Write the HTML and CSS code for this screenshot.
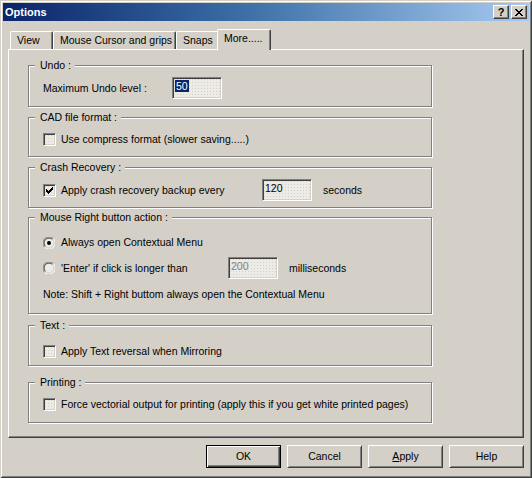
FILE: index.html
```html
<!DOCTYPE html>
<html>
<head>
<meta charset="utf-8">
<title>Options</title>
<link rel="stylesheet" href="styles.css">
</head>
<body>
<div class="window">
  <div class="titlebar">
    <span class="title">Options</span>
    <span class="capbtn help-btn">?</span>
    <span class="capbtn close-btn">
      <svg width="8" height="7" viewBox="0 0 8 7" shape-rendering="crispEdges"><path d="M0 0h2v1H0zM6 0h2v1H6zM1 1h2v1H1zM5 1h2v1H5zM2 2h4v1H2zM3 3h2v1H3zM2 4h4v1H2zM1 5h2v1H1zM5 5h2v1H5zM0 6h2v1H0zM6 6h2v1H6z" fill="#000"/></svg>
    </span>
  </div>
  <div class="body">
    <div class="tabs">
      <div class="tab t-view">View</div>
      <div class="tab t-mouse">Mouse Cursor and grips</div>
      <div class="tab t-snaps">Snaps</div>
      <div class="tab tab-sel t-more">More.....</div>
    </div>
    <div class="panel">
      <div class="group g-undo">
        <span class="legend">Undo :</span>
        <div class="row r-undo">
          <span class="lbl w-undo">Maximum Undo level :</span>
          <span class="edit"><span class="sel">50</span></span>
        </div>
      </div>
      <div class="group g-cad">
        <span class="legend">CAD file format :</span>
        <div class="row r-cad">
          <span class="check"></span>
          <span class="ctext">Use compress format (slower saving.....)</span>
        </div>
      </div>
      <div class="group g-crash">
        <span class="legend">Crash Recovery :</span>
        <div class="row r-crash">
          <span class="lblbox w-crash">
            <span class="check">
              <svg width="13" height="13" viewBox="0 0 13 13" shape-rendering="crispEdges"><path d="M3 5h1v3H3zM4 6h1v3H4zM5 7h1v3H5zM6 6h1v3H6zM7 5h1v3H7zM8 4h1v3H8zM9 3h1v3H9z" fill="#000"/></svg>
            </span>
            <span class="ctext">Apply crash recovery backup every</span>
          </span>
          <span class="edit">120</span>
          <span class="unit">seconds</span>
        </div>
      </div>
      <div class="group g-mouse">
        <span class="legend">Mouse Right button action :</span>
        <div class="row r-m1">
          <span class="radio">
            <svg width="12" height="12" viewBox="0 0 12 12">
              <circle cx="6" cy="6" r="5.5" fill="#EDEBE6"/>
              <path d="M1.6 10.4A5.5 5.5 0 0 1 10.4 1.6" fill="none" stroke="#808080" stroke-width="1"/>
              <path d="M10.4 1.6A5.5 5.5 0 0 1 1.6 10.4" fill="none" stroke="#ffffff" stroke-width="1"/>
              <path d="M2.5 9.5A4.5 4.5 0 0 1 9.5 2.5" fill="none" stroke="#404040" stroke-width="1"/>
              <path d="M9.5 2.5A4.5 4.5 0 0 1 2.5 9.5" fill="none" stroke="#D4D0C8" stroke-width="1"/>
              <circle cx="6" cy="6" r="2" fill="#000"/>
            </svg>
          </span>
          <span class="rtext">Always open Contextual Menu</span>
        </div>
        <div class="row r-m2">
          <span class="lblbox w-mouse">
            <span class="radio">
              <svg width="12" height="12" viewBox="0 0 12 12">
                <circle cx="6" cy="6" r="5.5" fill="#EDEBE6"/>
                <path d="M1.6 10.4A5.5 5.5 0 0 1 10.4 1.6" fill="none" stroke="#808080" stroke-width="1"/>
                <path d="M10.4 1.6A5.5 5.5 0 0 1 1.6 10.4" fill="none" stroke="#ffffff" stroke-width="1"/>
                <path d="M2.5 9.5A4.5 4.5 0 0 1 9.5 2.5" fill="none" stroke="#404040" stroke-width="1"/>
                <path d="M9.5 2.5A4.5 4.5 0 0 1 2.5 9.5" fill="none" stroke="#D4D0C8" stroke-width="1"/>
              </svg>
            </span>
            <span class="rtext">'Enter' if click is longer than</span>
          </span>
          <span class="edit edit-dis">200</span>
          <span class="unit">milliseconds</span>
        </div>
        <div class="note">Note: Shift + Right buttom always open the Contextual Menu</div>
      </div>
      <div class="group g-text">
        <span class="legend">Text :</span>
        <div class="row r-text">
          <span class="check"></span>
          <span class="ctext">Apply Text reversal when Mirroring</span>
        </div>
      </div>
      <div class="group g-print">
        <span class="legend">Printing :</span>
        <div class="row r-print">
          <span class="check"></span>
          <span class="ctext">Force vectorial output for printing (apply this if you get white printed pages)</span>
        </div>
      </div>
    </div>
    <div class="buttons">
      <span class="btn btn-default">OK</span>
      <span class="btn">Cancel</span>
      <span class="btn"><u>A</u>pply</span>
      <span class="btn">Help</span>
    </div>
  </div>
</div>
</body>
</html>
```
FILE: styles.css
```css
html, body {
  margin: 0;
  padding: 0;
  background: #D4D0C8;
}
body {
  font-family: "Liberation Sans", Arial, sans-serif;
  font-size: 10.5px;
  line-height: 13px;
  color: #000;
}
.window {
  width: 532px;
  height: 478px;
  box-sizing: border-box;
  padding: 3px;
  background: #D4D0C8;
  box-shadow: inset 1px 1px 0 #D4D0C8, inset -1px -1px 0 #404040, inset 2px 2px 0 #ffffff, inset -2px -2px 0 #808080;
  display: flex;
  flex-direction: column;
}
.titlebar {
  height: 18px;
  flex: none;
  display: flex;
  align-items: center;
  padding: 0 2px 0 2px;
  background: linear-gradient(to right, #0A246A 0%, #3A6EA5 45%, #A6CAF0 100%);
}
.title {
  color: #fff;
  font-weight: bold;
  font-size: 11px;
  flex: 1;
}
.capbtn {
  width: 16px;
  height: 14px;
  box-sizing: border-box;
  background: #D4D0C8;
  border-top: 1px solid #fff;
  border-left: 1px solid #fff;
  border-right: 1px solid #404040;
  border-bottom: 1px solid #404040;
  box-shadow: inset -1px -1px 0 #808080;
  display: flex;
  align-items: center;
  justify-content: center;
  font-weight: bold;
  font-size: 11px;
  line-height: 12px;
}
.help-btn {
  margin-right: 2px;
}
.close-btn svg {
  display: block;
}
.body {
  flex: 1;
  display: flex;
  flex-direction: column;
  padding: 8px 5px 7px 5px;
}
.tabs {
  height: 20px;
  display: flex;
  align-items: flex-end;
  margin-left: 2px;
}
.tab {
  height: 18px;
  box-sizing: border-box;
  border-top: 1px solid #fff;
  border-left: 1px solid #fff;
  border-right: 1px solid #404040;
  box-shadow: inset -1px 0 0 #808080;
  border-top-left-radius: 2px;
  border-top-right-radius: 2px;
  padding: 2px 0 0 6px;
  white-space: nowrap;
}
.t-view { width: 43px; }
.t-mouse { width: 123px; }
.t-snaps { width: 43px; }
.tab-sel {
  height: 21px;
  margin-bottom: -1px;
  margin-left: -2px;
  position: relative;
  z-index: 1;
  background: #D4D0C8;
  padding-top: 2px;
}
.t-more { width: 54px; }
.panel {
  width: 516px;
  height: 389px;
  box-sizing: border-box;
  border-top: 1px solid #fff;
  border-left: 1px solid #fff;
  border-right: 1px solid #404040;
  border-bottom: 1px solid #404040;
  box-shadow: inset -1px -1px 0 #808080;
  padding-left: 19px;
  display: flex;
  flex-direction: column;
}
.group {
  width: 404px;
  box-sizing: border-box;
  border: 1px solid #808080;
  box-shadow: 1px 1px 0 #fff, inset 1px 1px 0 #fff;
  padding-left: 14px;
  display: flex;
  flex-direction: column;
  flex: none;
}
.legend {
  align-self: flex-start;
  height: 13px;
  margin: -7px 0 -6px -8px;
  padding: 0 4px 0 5px;
  background: #D4D0C8;
  white-space: nowrap;
}
.g-undo { margin-top: 15px; height: 42px; }
.g-cad { margin-top: 10px; height: 40px; }
.g-crash { margin-top: 10px; height: 41px; }
.g-mouse { margin-top: 9px; height: 97px; }
.g-text { margin-top: 11px; height: 41px; }
.g-print { margin-top: 16px; height: 41px; }
.row {
  display: flex;
  align-items: center;
  white-space: nowrap;
}
.r-undo { margin-top: 11px; height: 22px; }
.r-cad { margin-top: 15px; height: 13px; }
.r-crash { margin-top: 11px; height: 22px; }
.r-m1 { margin-top: 18px; height: 13px; }
.r-m2 { margin-top: 8px; height: 22px; }
.note { margin-top: 9px; white-space: nowrap; }
.r-text { margin-top: 19px; height: 13px; }
.r-print { margin-top: 15px; height: 13px; }
.lbl { display: block; }
.lblbox { display: flex; align-items: center; }
.w-undo { width: 129px; }
.w-crash { width: 219px; }
.w-mouse { width: 185px; }
.check {
  width: 13px;
  height: 13px;
  box-sizing: border-box;
  flex: none;
  border-top: 1px solid #808080;
  border-left: 1px solid #808080;
  border-right: 1px solid #fff;
  border-bottom: 1px solid #fff;
  box-shadow: inset 1px 1px 0 #404040, inset -1px -1px 0 #D4D0C8;
  background: radial-gradient(circle, #D4D0C8 0.6px, transparent 0.8px) 0 0 / 3px 3px, #EDEBE6;
  position: relative;
}
.check svg {
  display: block;
  margin: -1px;
}
.ctext { margin-left: 5px; }
.radio {
  width: 12px;
  height: 12px;
  flex: none;
}
.radio svg { display: block; }
.rtext { margin-left: 6px; }
.edit {
  width: 50px;
  height: 22px;
  box-sizing: border-box;
  flex: none;
  border-top: 1px solid #808080;
  border-left: 1px solid #808080;
  border-right: 1px solid #fff;
  border-bottom: 1px solid #fff;
  box-shadow: inset 1px 1px 0 #404040, inset -1px -1px 0 #D4D0C8;
  background: radial-gradient(circle, #D4D0C8 0.6px, transparent 0.8px) 0 0 / 3px 3px, #EDEBE6;
  padding: 2px 0 0 2px;
  line-height: 13px;
}
.edit-dis { color: #808080; }
.sel {
  background: #0A246A;
  color: #fff;
  padding: 0 1px;
}
.unit { margin-left: 11px; }
.buttons {
  margin-top: 7px;
  display: flex;
  justify-content: flex-end;
  gap: 6px;
}
.btn {
  width: 75px;
  height: 23px;
  box-sizing: border-box;
  border-top: 1px solid #fff;
  border-left: 1px solid #fff;
  border-right: 1px solid #404040;
  border-bottom: 1px solid #404040;
  box-shadow: inset 1px 1px 0 #D4D0C8, inset -1px -1px 0 #808080;
  display: flex;
  align-items: center;
  justify-content: center;
}
.btn-default {
  border: 1px solid #000;
  box-shadow: inset 1px 1px 0 #fff, inset -1px -1px 0 #404040, inset -2px -2px 0 #808080;
}
```
